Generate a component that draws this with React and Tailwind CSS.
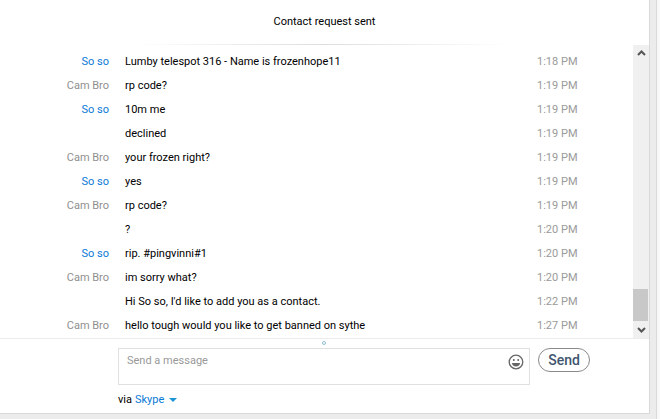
import React from 'react';

const messages = [
  { who: 'So so', me: true, text: 'Lumby telespot 316 - Name is frozenhope11', time: '1:18 PM' },
  { who: 'Cam Bro', text: 'rp code?', time: '1:19 PM' },
  { who: 'So so', me: true, text: '10m me', time: '1:19 PM' },
  { who: '', text: 'declined', time: '1:19 PM' },
  { who: 'Cam Bro', text: 'your frozen right?', time: '1:19 PM' },
  { who: 'So so', me: true, text: 'yes', time: '1:19 PM' },
  { who: 'Cam Bro', text: 'rp code?', time: '1:19 PM' },
  { who: '', text: '?', time: '1:20 PM' },
  { who: 'So so', me: true, text: 'rip. #pingvinni#1', time: '1:20 PM' },
  { who: 'Cam Bro', text: 'im sorry what?', time: '1:20 PM' },
  { who: '', text: "Hi So so, I'd like to add you as a contact.", time: '1:22 PM' },
  { who: 'Cam Bro', text: 'hello tough would you like to get banned on sythe', time: '1:27 PM' },
];

const Row = ({ m }) => (
  <div className="flex h-6 items-center">
    <div className={`w-[109px] text-right ${m.me ? 'text-[#0a7ad6]' : 'text-[#8f8f8f]'}`}>{m.who}</div>
    <div className="ml-[16px] w-[412px] text-black">{m.text}</div>
    <div className="text-[#9a9a9a]">{m.time}</div>
  </div>
);

const Smiley = () => (
  <svg width="16" height="16" viewBox="0 0 16 16" fill="none">
    <circle cx="8" cy="8" r="6.8" stroke="#666" strokeWidth="1.3" />
    <circle cx="5.800" cy="6" r="1" fill="#666" />
    <circle cx="10.200" cy="6" r="1" fill="#666" />
    <path d="M4 9h8c0 2.200-1.800 3.400-4 3.400S4 11.200 4 9z" fill="#666" />
  </svg>
);

export default function App() {
  return (
    <div className="flex h-[419px] w-[660px] overflow-hidden bg-[#ececec] font-['Roboto',sans-serif] text-[11px]">
      <div className="h-full w-[650px] shrink-0">
        <div className="flex h-[414px] flex-col border-r border-b border-[#d9d9d9] bg-white">
          <div className="flex h-[44px] shrink-0 items-start justify-center pt-[14px] text-black">Contact request sent</div>
          <div className="ml-[135px] h-px w-[375px] shrink-0 bg-gradient-to-r from-white via-[#dddddd] to-white" />
          <div className="flex h-[293px] shrink-0">
            <div className="flex-1 pt-[5px]">
              {messages.map((m, i) => <Row key={i} m={m} />)}
            </div>
            <div className="relative flex w-[16px] flex-col items-center justify-between bg-[#f0f0f0] py-1">
              <svg width="9" height="6" viewBox="0 0 9 6" fill="none" className="mt-[1px]"><path d="M1 5l3.500-3.500L8 5" stroke="#555" strokeWidth="2" /></svg>
              <div className="absolute bottom-[17px] left-0 h-[32px] w-[15px] bg-[#c8c8c8]" />
              <svg width="9" height="6" viewBox="0 0 9 6" fill="none" className="mb-[1px]"><path d="M1 1l3.500 3.500L8 1" stroke="#555" strokeWidth="2" /></svg>
            </div>
          </div>
          <div className="relative flex-1 border-t border-[#ececec] pl-[118px]">
            <div className="absolute left-[322px] top-[2px] size-[4px] rounded-full border border-[#8fc1cf]" />
            <div className="mt-[9px] flex items-start">
              <div className="flex h-[37px] w-[412px] justify-between border border-[#e0e0e0] pl-2 pr-[5px] pt-[4px] text-[#999]">
                <span>Send a message</span>
                <div className="mt-[1px]"><Smiley /></div>
              </div>
              <button className="ml-2 h-6 w-[52px] rounded-full border border-[#8a8a8a] text-[14px] font-medium text-[#40566e]">Send</button>
            </div>
            <div className="mt-[7px] flex items-center text-black">
              via <span className="ml-[3px] text-[#0a7ad6]">Skype</span>
              <span className="ml-[5px] h-0 w-0 border-x-4 border-t-4 border-x-transparent border-t-[#1a96d4]" />
            </div>
          </div>
        </div>
      </div>
      <div className="h-full w-[7px] shrink-0 border-r border-[#d9d9d9]" />
      <div className="h-full flex-1 bg-[#f8f8f8]" />
    </div>
  );
}
